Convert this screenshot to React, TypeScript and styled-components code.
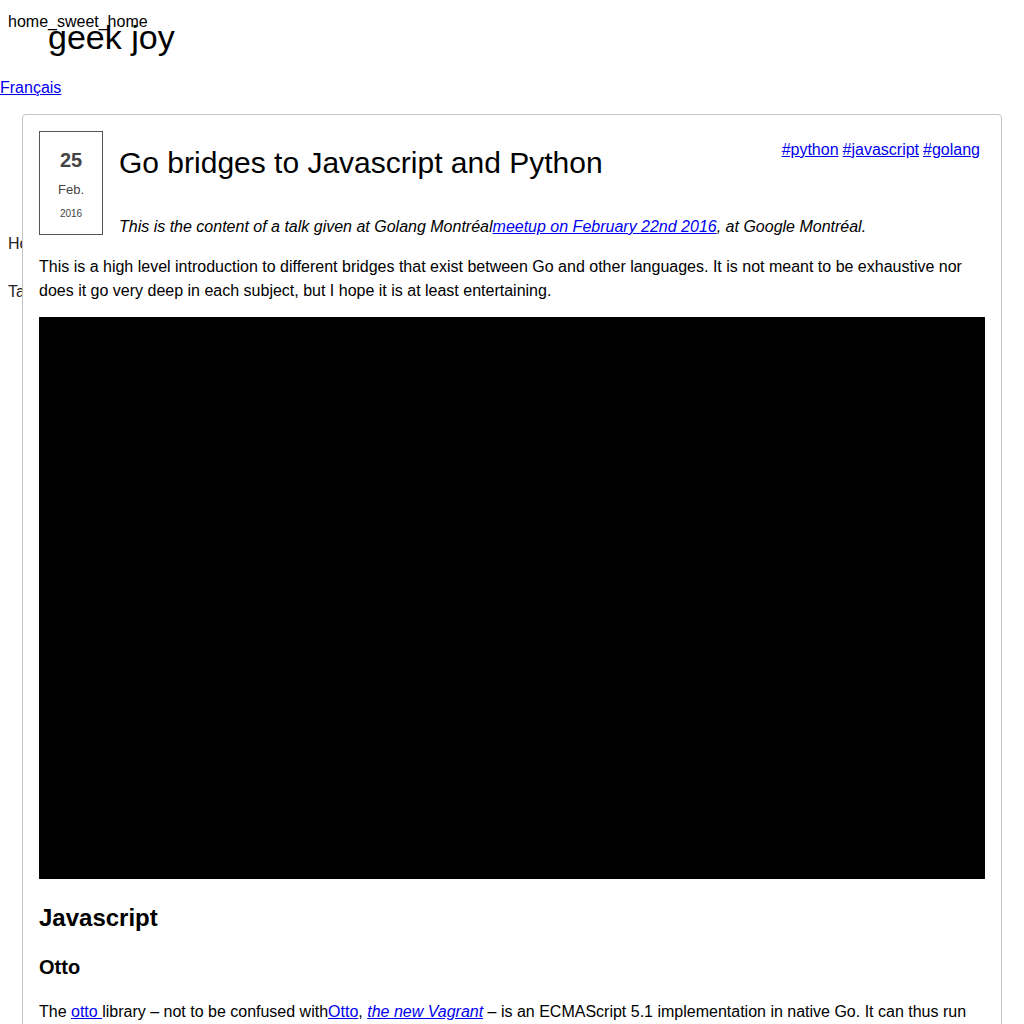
import React from "react";
import styled, { createGlobalStyle } from "styled-components";

const Global = createGlobalStyle`
  html, body { margin: 0; padding: 0; background: #fff; }
  body { font-family: "Liberation Sans", Arial, sans-serif; color: #000; font-size: 16px; }
  a { color: #0000ee; }
`;

const Header = styled.header`
  display: grid;
  height: 60px;
  padding: 8px 8px 0;
`;

const SiteName = styled.div`
  grid-area: 1 / 1;
  font-size: 16px;
  line-height: 18px;
  margin-top: 5px;
  z-index: 1;
`;

const Brand = styled.div`
  grid-area: 1 / 1;
  font-size: 34px;
  line-height: 40px;
  margin: 9px 0 0 40px;
`;

const LangLink = styled.a`
  display: block;
  margin-top: 11px;
  font-size: 16px;
  line-height: 18px;
  width: max-content;
`;

const Main = styled.div`
  display: grid;
  margin-top: 17px;
  padding: 0 8px;
`;

const Sidebar = styled.nav`
  grid-area: 1 / 1;
  padding-top: 121px;
  display: flex;
  flex-direction: column;
  gap: 30px;
  font-size: 16px;
  line-height: 18px;
  color: #222;
`;

const Card = styled.article`
  grid-area: 1 / 1;
  margin: 0 14px 0 14px;
  background: #fff;
  border: 1px solid #c4c4c4;
  border-radius: 4px;
  padding: 16px;
  z-index: 1;
  line-height: 24px;
`;

const DateBox = styled.div`
  float: left;
  width: 62px;
  border: 1px solid #555;
  margin-right: 16px;
  margin-bottom: 16px;
  display: flex;
  flex-direction: column;
  align-items: center;
  color: #444;
  padding-top: 16px;
  height: 86px;
`;

const Day = styled.div`
  font-size: 20px;
  font-weight: bold;
  line-height: 24px;
`;

const Month = styled.div`
  font-size: 13px;
  line-height: 16px;
  margin-top: 10px;
`;

const Year = styled.div`
  font-size: 10px;
  line-height: 12px;
  margin-top: 10px;
`;

const Tags = styled.div`
  float: right;
  margin: 9px 5px 0 0;
  display: flex;
  gap: 4px;
  font-size: 16px;
  line-height: 20px;
`;

const Title = styled.h1`
  margin: 14px 0 0;
  font-size: 30px;
  font-weight: normal;
  line-height: 36px;
`;

const Intro = styled.p`
  margin: 34px 0 0;
  font-style: italic;
`;

const Para = styled.p<{ $gap?: number }>`
  margin: ${(p) => p.$gap ?? 16}px 0 0;
`;

const Video = styled.div`
  clear: both;
  margin-top: 14px;
  height: 562px;
  background: #000;
`;

const H2 = styled.h2`
  font-size: 24px;
  font-weight: bold;
  line-height: 28px;
  margin: 25px 0 0;
`;

const H3 = styled.h3`
  font-size: 20px;
  font-weight: bold;
  line-height: 24px;
  margin: 23px 0 0;
`;

export default function App() {
  return (
    <>
      <Global />
      <Header>
        <SiteName>home_sweet_home</SiteName>
        <Brand>geek joy</Brand>
      </Header>
      <LangLink href="#">Français</LangLink>
      <Main>
        <Sidebar>
          <div>Home</div>
          <div>Tags</div>
        </Sidebar>
        <Card>
          <DateBox>
            <Day>25</Day>
            <Month>Feb.</Month>
            <Year>2016</Year>
          </DateBox>
          <Tags>
            <a href="#">#python</a>
            <a href="#">#javascript</a>
            <a href="#">#golang</a>
          </Tags>
          <Title>Go bridges to Javascript and Python</Title>
          <Intro>
            This is the content of a talk given at Golang Montréal
            <a href="#">meetup on February 22nd 2016</a>, at Google Montréal.
          </Intro>
          <Para>
            This is a high level introduction to different bridges that exist between Go and other
            languages. It is not meant to be exhaustive nor does it go very deep in each subject, but I
            hope it is at least entertaining.
          </Para>
          <Video />
          <H2>Javascript</H2>
          <H3>Otto</H3>
          <Para $gap={21}>
            The <a href="#">otto </a>library – not to be confused with<a href="#">Otto</a>,{" "}
            <a href="#">
              <em>the new Vagrant</em>
            </a>{" "}
            – is an ECMAScript 5.1 implementation in native Go. It can thus run any Javascript code
            within a Go program, and it is quite fast to start.
          </Para>
        </Card>
      </Main>
    </>
  );
}
